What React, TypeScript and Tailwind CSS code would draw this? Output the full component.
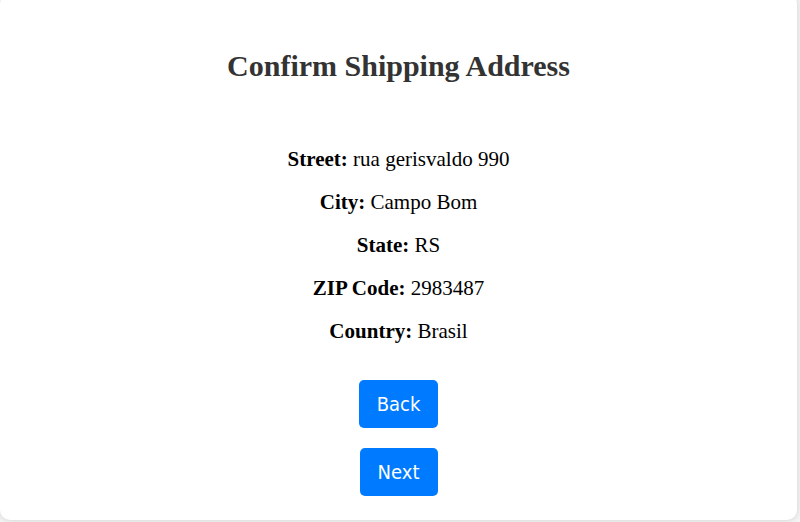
export default function App() {
  const rows: [string, string][] = [
    ["Street:", "rua gerisvaldo 990"],
    ["City:", "Campo Bom"],
    ["State:", "RS"],
    ["ZIP Code:", "2983487"],
    ["Country:", "Brasil"],
  ];
  return (
    <div className="h-[522px] w-[800px] overflow-hidden bg-[#f4f4f4]">
      <div className="-mt-[6px] flex h-[526px] w-[797px] flex-col items-center rounded-[10px] bg-white pt-[55px] shadow-[0_0_6px_rgba(0,0,0,0.15)]">
        <h2 className="text-[30px] font-bold leading-[34px] text-[#333] [font-family:'Liberation_Serif',serif]">
          Confirm Shipping Address
        </h2>
        <div className="mt-[64px] flex flex-col items-center gap-[18px] text-[21px] leading-[25px] text-black [font-family:'Liberation_Serif',serif]">
          {rows.map(([k, v]) => (
            <p key={k}>
              <strong>{k}</strong> {v}
            </p>
          ))}
        </div>
        <div className="mt-[36px] flex flex-col items-center gap-[20px]">
          <button className="h-[48px] w-[79px] rounded-[5px] bg-[#007bff] text-[20px] text-white [font-family:'DejaVu_Sans_Condensed','DejaVu_Sans',sans-serif]">
            Back
          </button>
          <button className="h-[48px] w-[78px] rounded-[5px] bg-[#007bff] text-[20px] text-white [font-family:'DejaVu_Sans_Condensed','DejaVu_Sans',sans-serif]">
            Next
          </button>
        </div>
      </div>
    </div>
  );
}
